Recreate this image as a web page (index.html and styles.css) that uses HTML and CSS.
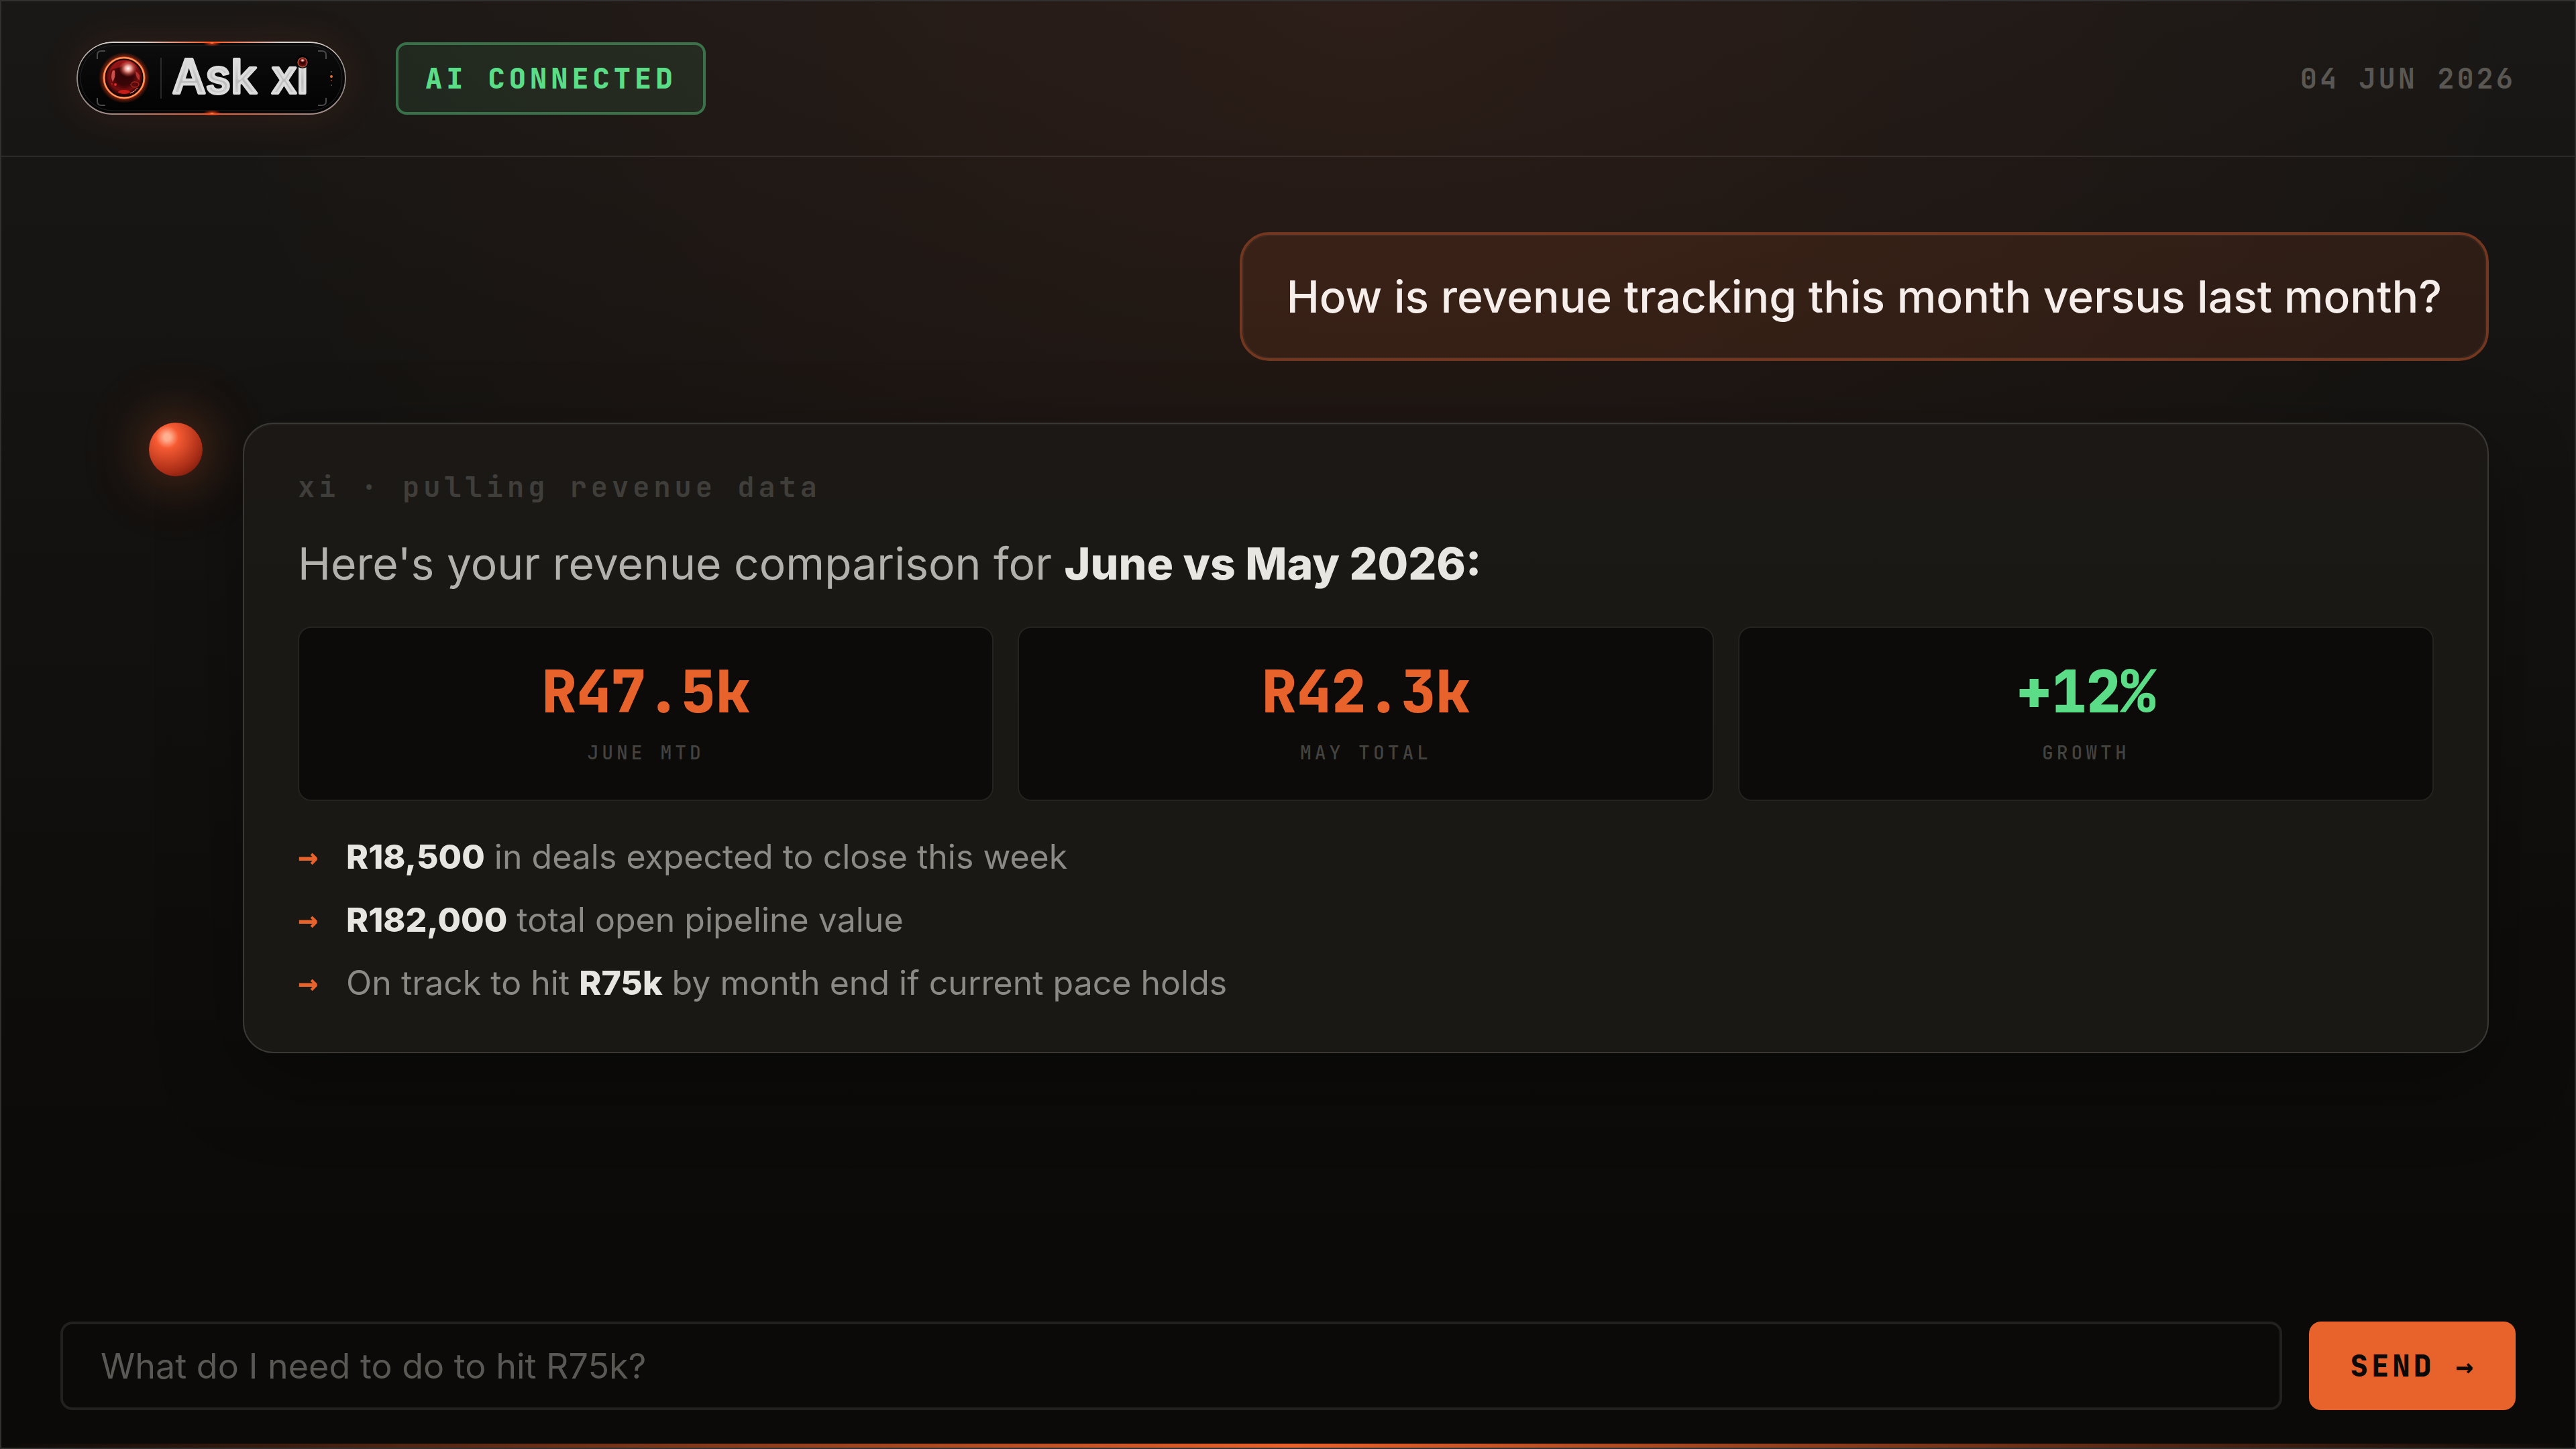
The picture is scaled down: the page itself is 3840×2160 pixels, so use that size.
FILE: index.html
```html
<!DOCTYPE html>
<html lang="en">
<head>
    <meta charset="UTF-8">
    <meta name="viewport" content="width=device-width, initial-scale=1.0">
    <title>Ask xi</title>
    <link rel="stylesheet" href="styles.css">
</head>
<body>
    <div class="app">
        <!-- Top bar -->
        <header class="header">
            <svg class="logo" viewBox="0 0 402 110" role="img" aria-label="Ask xi">
                <defs>
                    <linearGradient id="rim" x1="0" y1="0" x2="0" y2="1">
                        <stop offset="0" stop-color="#d8d0cc"/>
                        <stop offset="0.5" stop-color="#8d8684"/>
                        <stop offset="1" stop-color="#a08c88"/>
                    </linearGradient>
                    <linearGradient id="pill" x1="0" y1="0" x2="0" y2="1">
                        <stop offset="0" stop-color="#0e0d0d"/>
                        <stop offset="1" stop-color="#020202"/>
                    </linearGradient>
                    <linearGradient id="metal" x1="0" y1="0" x2="0" y2="1">
                        <stop offset="0" stop-color="#f2f2f2"/>
                        <stop offset="0.6" stop-color="#bdbdbd"/>
                        <stop offset="1" stop-color="#d9d9d9"/>
                    </linearGradient>
                    <linearGradient id="edge" x1="0" y1="0" x2="1" y2="0">
                        <stop offset="0" stop-color="#ff4a1c" stop-opacity="0"/>
                        <stop offset="0.5" stop-color="#ff5a22"/>
                        <stop offset="1" stop-color="#ff4a1c" stop-opacity="0"/>
                    </linearGradient>
                    <radialGradient id="flare">
                        <stop offset="0" stop-color="#ffb070"/>
                        <stop offset="0.25" stop-color="#ff4a1c" stop-opacity="0.7"/>
                        <stop offset="1" stop-color="#ff3a10" stop-opacity="0"/>
                    </radialGradient>
                    <radialGradient id="ballGlow">
                        <stop offset="0.72" stop-color="#ff4a1c" stop-opacity="0.7"/>
                        <stop offset="1" stop-color="#ff3a10" stop-opacity="0"/>
                    </radialGradient>
                    <radialGradient id="ball" cx="0.5" cy="0.45" r="0.55">
                        <stop offset="0" stop-color="#2c0405"/>
                        <stop offset="0.45" stop-color="#3a0507"/>
                        <stop offset="0.75" stop-color="#7a0f10"/>
                        <stop offset="1" stop-color="#1c0203"/>
                    </radialGradient>
                    <radialGradient id="shine">
                        <stop offset="0" stop-color="#fff"/>
                        <stop offset="0.35" stop-color="#ffb0a4" stop-opacity="0.9"/>
                        <stop offset="1" stop-color="#e0302a" stop-opacity="0"/>
                    </radialGradient>
                </defs>
                <rect x="1" y="1" width="400" height="107" rx="53" fill="url(#pill)" stroke="url(#rim)" stroke-width="2"/>
                <rect x="6" y="6" width="390" height="97" rx="48" fill="none" stroke="#232323"/>
                <rect x="100" y="0" width="204" height="2" fill="url(#edge)"/>
                <rect x="40" y="107" width="324" height="2" fill="url(#edge)"/>
                <ellipse cx="202" cy="2" rx="14" ry="5" fill="url(#flare)"/>
                <ellipse cx="202" cy="107" rx="14" ry="5" fill="url(#flare)"/>

                <!-- corner brackets -->
                <path d="M31 26V20Q31 14 37 14H43M31 84V89Q31 95 37 95H43M360 14H366Q372 14 372 20V26M360 95H366Q372 95 372 89V84" fill="none" stroke="#4a4a4a" stroke-width="2"/>

                <!-- glass orb -->
                <circle cx="71" cy="54" r="38" fill="url(#ballGlow)"/>
                <circle cx="71" cy="54" r="30" fill="#120102" stroke="#ff6a35" stroke-width="3"/>
                <circle cx="71" cy="54" r="30" fill="none" stroke="#ffc08a"/>
                <circle cx="71" cy="54" r="27" fill="url(#ball)"/>
                <path d="M50 42Q56 29 68 28Q76 27 84 32Q72 32 66 38Q58 40 50 42Z" fill="#a3181a" opacity="0.7"/>
                <ellipse cx="77" cy="40" rx="14" ry="13" fill="url(#shine)"/>
                <path d="M54 43Q50 52 54 60Q59 52 57 43Z" fill="#e8615a" opacity="0.8"/>
                <path d="M88 44Q96 48 94 58Q88 54 88 44Z" fill="#c83a36" opacity="0.8"/>
                <ellipse cx="87" cy="64" rx="6" ry="4" fill="#5c090b" stroke="#c0392b"/>
                <ellipse cx="71" cy="75" rx="9" ry="3" fill="#e0201c" opacity="0.8"/>
                <circle cx="58" cy="64" r="2" fill="#e02a24"/>
                <circle cx="53" cy="63" r="1" fill="#c0241f"/>
                <path d="M80 77Q87 75 91 69" fill="none" stroke="#ffb0a0" stroke-width="1"/>

                <path d="M126 24V85" stroke="#4b4b4b" stroke-width="1"/>
                <text class="logo-text" y="77"><tspan x="143">Ask</tspan><tspan x="290 328">xi</tspan></text>

                <!-- red dot on the i -->
                <circle cx="337" cy="30" r="10" fill="#060505"/>
                <circle cx="337" cy="31" r="7" fill="url(#ball)" stroke="#e9805a" stroke-width="1"/>
                <ellipse cx="337" cy="28" rx="4" ry="3" fill="url(#shine)"/>

                <circle cx="380" cy="45" r="1" fill="#555"/>
                <circle cx="380" cy="52" r="2" fill="#e8703a"/>
                <circle cx="380" cy="58" r="1" fill="#b03a20"/>
                <circle cx="380" cy="65" r="1" fill="#555"/>
            </svg>
            <span class="status">AI CONNECTED</span>
            <time class="date" datetime="2026-06-04">04 JUN 2026</time>
        </header>

        <!-- Conversation -->
        <main class="chat">
            <div class="msg-user">How is revenue tracking this month versus last month?</div>

            <div class="msg-ai">
                <div class="orb"></div>
                <section class="card">
                    <p class="card-label">xi · pulling revenue data</p>
                    <p class="card-title">Here's your revenue comparison for <strong>June vs May 2026:</strong></p>
                    <div class="stats">
                        <div class="stat">
                            <div class="stat-value">R47.5k</div>
                            <div class="stat-label">JUNE MTD</div>
                        </div>
                        <div class="stat">
                            <div class="stat-value">R42.3k</div>
                            <div class="stat-label">MAY TOTAL</div>
                        </div>
                        <div class="stat">
                            <div class="stat-value green">+12%</div>
                            <div class="stat-label">GROWTH</div>
                        </div>
                    </div>
                    <ul class="points">
                        <li><span class="arrow">→</span><span><strong>R18,500</strong> in deals expected to close this week</span></li>
                        <li><span class="arrow">→</span><span><strong>R182,000</strong> total open pipeline value</span></li>
                        <li><span class="arrow">→</span><span>On track to hit <strong>R75k</strong> by month end if current pace holds</span></li>
                    </ul>
                </section>
            </div>
        </main>

        <!-- Message box -->
        <form class="composer">
            <input class="composer-input" type="text" aria-label="Message" placeholder="What do I need to do to hit R75k?">
            <button class="send" type="button">SEND <span class="send-arrow">→</span></button>
        </form>
        <div class="bottom-glow"></div>
    </div>
</body>
</html>
```
FILE: styles.css
```css
/* General Styling */
* {
    box-sizing: border-box;
    margin: 0;
    padding: 0;
}

:root {
    --orange: #e8622c;
    --green: #5bdc86;
    --light: #e8e6e1;
    --mono: "JetBrains Mono", "DejaVu Sans Mono", monospace;
}

body {
    background: #0a0908;
    color: var(--light);
    font-family: Inter, sans-serif;
}

.app {
    min-height: 100vh;
    display: flex;
    flex-direction: column;
    border: 2px solid #33312f;
    background:
        radial-gradient(ellipse 45% 60% at 53% 0, rgba(232, 88, 50, 0.09), transparent),
        linear-gradient(#1a1816, #0b0a08 85%);
}

/* Header */
.header {
    display: flex;
    align-items: center;
    height: 232px;
    padding: 0 88px 0 112px;
    border-bottom: 2px solid rgba(255, 255, 255, 0.09);
}

.logo {
    width: 402px;
    height: 110px;
    margin-right: 74px;
    border-radius: 55px;
    box-shadow: 0 0 60px rgba(232, 80, 44, 0.12);
}

.logo-text {
    font-family: Inter, sans-serif;
    font-size: 70px;
    font-weight: 500;
    fill: url(#metal);
    stroke: #dcdcdc;
    stroke-width: 4;
    stroke-linejoin: round;
}

.status {
    padding: 24px 40px;
    border: 4px solid rgba(91, 220, 134, 0.4);
    border-radius: 16px;
    background: rgba(91, 220, 134, 0.09);
    color: var(--green);
    font: 800 42px/52px var(--mono);
    letter-spacing: 6px;
}

.date {
    margin-left: auto;
    color: #5a5753;
    font: 600 42px/52px var(--mono);
    letter-spacing: 4px;
}

/* Messages */
.chat {
    flex: 1;
    display: flex;
    flex-direction: column;
    gap: 92px;
    padding: 112px 128px 112px 220px;
}

.msg-user {
    align-self: flex-end;
    padding: 42px 66px;
    border: 4px solid #73361e;
    border-radius: 44px;
    background: rgba(232, 98, 44, 0.11);
    box-shadow: inset 0 0 0 2px rgba(255, 255, 255, 0.04);
    color: #f5eeea;
    font-size: 66px;
    font-weight: 500;
    line-height: 100px;
}

.msg-ai {
    display: flex;
    align-items: flex-start;
    gap: 60px;
}

.orb {
    flex: none;
    width: 80px;
    height: 80px;
    border-radius: 50%;
    background:
        radial-gradient(circle at 34% 27%, #ffb090 6%, rgba(255, 176, 144, 0) 21%),
        radial-gradient(circle at 34% 27%, #f85c34 20%, #a82c16 68%, #5e150c 95%);
    box-shadow: 0 0 80px rgba(232, 98, 44, 0.45), 0 0 160px rgba(232, 98, 44, 0.12);
}

.card {
    flex: 1;
    padding: 66px 80px 68px;
    border: 2px solid #3a3835;
    border-radius: 46px;
    background: linear-gradient(#1b1815, #191815);
    box-shadow: 0 40px 120px rgba(0, 0, 0, 0.35), inset 0 2px rgba(255, 255, 255, 0.03);
}

.card-label {
    margin-bottom: 36px;
    color: #403e3a;
    font: 600 42px/56px var(--mono);
    letter-spacing: 6px;
}

.card-title {
    margin-bottom: 44px;
    color: #b3b1ac;
    font-size: 66px;
    line-height: 100px;
}

.card strong {
    color: var(--light);
    font-weight: 800;
}

/* Stats */
.stats {
    display: grid;
    grid-template-columns: repeat(3, 1fr);
    gap: 36px;
    margin-bottom: 48px;
}

.stat {
    padding: 50px 0 52px;
    border: 2px solid #242320;
    border-radius: 20px;
    background: #0c0b09;
    text-align: center;
}

.stat-value {
    margin-bottom: 30px;
    color: var(--orange);
    font: 800 88px/88px var(--mono);
    letter-spacing: -1px;
}

.stat-value.green {
    color: var(--green);
}

.stat-label {
    color: #444340;
    font: 500 28px/36px var(--mono);
    letter-spacing: 5px;
}

.points {
    display: flex;
    flex-direction: column;
    gap: 24px;
    list-style: none;
    color: #8c8a85;
    font-size: 50px;
    line-height: 70px;
}

.points li {
    display: flex;
    gap: 42px;
}

.arrow {
    color: var(--orange);
    font-family: "DejaVu Sans Mono", monospace;
    font-weight: bold;
}

/* Message box */
.composer {
    display: flex;
    gap: 40px;
    padding: 0 88px 50px;
}

.composer-input {
    flex: 1;
    min-width: 0;
    height: 132px;
    padding: 0 56px;
    border: 4px solid #22211f;
    border-radius: 18px;
    background: #0b0a08;
    color: var(--light);
    font: 52px Inter, sans-serif;
}

.composer-input::placeholder {
    color: #5a5854;
    opacity: 1;
}

.send {
    padding: 0 58px 0 62px;
    border: none;
    border-radius: 18px;
    background: var(--orange);
    color: #0c0a08;
    font: 800 44px/60px var(--mono);
    letter-spacing: 5px;
    cursor: pointer;
}

.send-arrow {
    font-family: "DejaVu Sans Mono", monospace;
}

.bottom-glow {
    height: 6px;
    background: linear-gradient(to right, transparent, var(--orange), transparent);
}
```
